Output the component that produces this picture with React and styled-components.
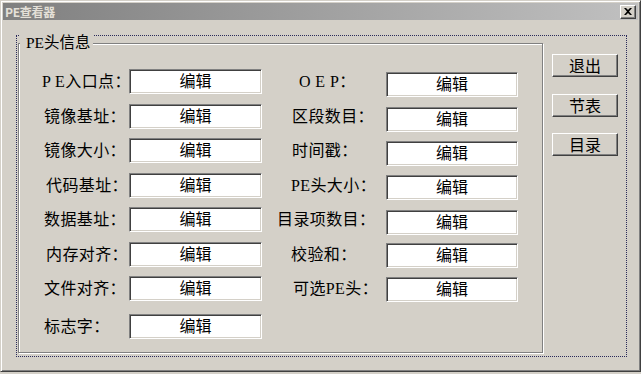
import React from "react";
import styled, { createGlobalStyle } from "styled-components";

const GlobalStyle = createGlobalStyle`
  html, body {
    margin: 0;
    padding: 0;
    background: #d4d0c8;
  }
  * {
    box-sizing: border-box;
  }
`;

const leftFields = [
  { label: "P E入口点：", indent: -2 },
  { label: "镜像基址：", indent: 0 },
  { label: "镜像大小：", indent: 0 },
  { label: "代码基址：", indent: 2 },
  { label: "数据基址：", indent: 0 },
  { label: "内存对齐：", indent: 2 },
  { label: "文件对齐：", indent: 0 },
];

const rightFields = [
  { label: "O E P：", indent: 37, drop: 3 },
  { label: "区段数目：", indent: 30, drop: 3 },
  { label: "时间戳：", indent: 30, drop: 3 },
  { label: "PE头大小：", indent: 29, drop: 2 },
  { label: "目录项数目：", indent: 15, drop: 3 },
  { label: "校验和：", indent: 29, drop: 1 },
  { label: "可选PE头：", indent: 31, drop: 1 },
];

function App() {
  return (
    <>
      <GlobalStyle />
      <Window>
        <TitleBar>
          <Title>PE查看器</Title>
          <CloseBtn>
            <svg width="8" height="7" viewBox="0 0 8 7">
              <path
                d="M0 0h2l2 2 2-2h2L5 3.5 8 7H6L4 5 2 7H0l3-3.5z"
                fill="#000"
              />
            </svg>
          </CloseBtn>
        </TitleBar>
        <Client>
          <FocusFrame>
            <GroupBox>
              <Legend>PE头信息</Legend>
              <FieldGrid>
                {leftFields.map((left, i) => (
                  <React.Fragment key={left.label}>
                    <Label $indent={left.indent}>{left.label}</Label>
                    <Edit>编辑</Edit>
                    <Label $indent={rightFields[i].indent}>
                      {rightFields[i].label}
                    </Label>
                    <Edit $drop={rightFields[i].drop}>编辑</Edit>
                  </React.Fragment>
                ))}
                <Label $indent={0} $last>
                  标志字：
                </Label>
                <Edit $drop={3}>编辑</Edit>
              </FieldGrid>
            </GroupBox>
            <ButtonColumn>
              <PushButton>退出</PushButton>
              <PushButton>节表</PushButton>
              <PushButton>目录</PushButton>
            </ButtonColumn>
          </FocusFrame>
        </Client>
      </Window>
    </>
  );
}

export default App;

const Window = styled.div`
  width: 641px;
  height: 372px;
  padding: 1px;
  background: #d4d0c8;
  border-top: 1px solid #d4d0c8;
  border-left: 1px solid #d4d0c8;
  border-right: 1px solid #404040;
  border-bottom: 1px solid #404040;
  box-shadow: inset 1px 1px 0 #ffffff, inset -1px -1px 0 #808080;
  display: flex;
  flex-direction: column;
`;

const TitleBar = styled.div`
  height: 17px;
  margin: 1px 1px 0 1px;
  background: linear-gradient(to right, #808080, #c0c0c0);
  display: flex;
  align-items: center;
  justify-content: space-between;
  padding: 0 2px 0 2px;
`;

const Title = styled.span`
  font-family: "Noto Sans CJK SC", "Liberation Sans", sans-serif;
  font-weight: 700;
  font-size: 12px;
  line-height: 17px;
  color: #e4e0d8;
  letter-spacing: -0.3px;
`;

const CloseBtn = styled.div`
  width: 16px;
  height: 14px;
  background: #d4d0c8;
  border-top: 1px solid #ffffff;
  border-left: 1px solid #ffffff;
  border-right: 1px solid #404040;
  border-bottom: 1px solid #404040;
  box-shadow: inset -1px -1px 0 #808080;
  display: flex;
  align-items: center;
  justify-content: center;
  padding-right: 1px;
`;

const Client = styled.div`
  flex: 1;
  padding: 15px 0 0 14px;
`;

const FocusFrame = styled.div`
  width: 611px;
  height: 322px;
  border: 1px dotted #2a2a5a;
  display: flex;
  align-items: flex-start;
`;

const GroupBox = styled.div`
  position: relative;
  width: 525px;
  height: 310px;
  margin: 7px 0 0 1px;
  border: 1px solid #808080;
  box-shadow: inset 1px 1px 0 #ffffff, 1px 1px 0 #ffffff;
  padding: 25px 0 0 25px;
`;

const Legend = styled.span`
  position: absolute;
  left: 1px;
  top: -10px;
  padding: 0 2px 2px 6px;
  background: #d4d0c8;
  font-family: "Liberation Serif", "Noto Sans CJK SC", serif;
  font-size: 15.5px;
  line-height: 17px;
  color: #000;
`;

const FieldGrid = styled.div`
  display: grid;
  grid-template-columns: 85px 133px 124px 132px;
  grid-auto-rows: 25px;
  row-gap: 9.5px;
`;

const Label = styled.div`
  font-family: "Liberation Serif", "Noto Sans CJK SC", serif;
  font-size: 16px;
  line-height: 25px;
  letter-spacing: 0.4px;
  color: #000;
  white-space: nowrap;
  padding-left: ${(p) => p.$indent}px;
  margin-left: ${(p) => (p.$indent < 0 ? p.$indent : 0)}px;
  margin-top: ${(p) => (p.$last ? 3 : 0)}px;
`;

const Edit = styled.div`
  height: 25px;
  margin-top: ${(p) => p.$drop || 0}px;
  background: #ffffff;
  border-top: 1px solid #808080;
  border-left: 1px solid #808080;
  border-right: 1px solid #ffffff;
  border-bottom: 1px solid #ffffff;
  box-shadow: inset 1px 1px 0 #404040, inset -1px -1px 0 #d4d0c8;
  font-family: "Noto Sans CJK SC", "Liberation Sans", sans-serif;
  font-size: 16px;
  line-height: 20px;
  text-align: center;
  color: #000;
`;

const ButtonColumn = styled.div`
  display: flex;
  flex-direction: column;
  gap: 16.5px;
  margin: 18px 0 0 9px;
`;

const PushButton = styled.div`
  width: 66px;
  height: 23px;
  background: #d4d0c8;
  border-top: 1px solid #ffffff;
  border-left: 1px solid #ffffff;
  border-right: 1px solid #404040;
  border-bottom: 1px solid #404040;
  box-shadow: inset -1px -1px 0 #808080;
  font-family: "Noto Sans CJK SC", "Liberation Sans", sans-serif;
  font-size: 16px;
  line-height: 20px;
  text-align: center;
  color: #000;
`;
